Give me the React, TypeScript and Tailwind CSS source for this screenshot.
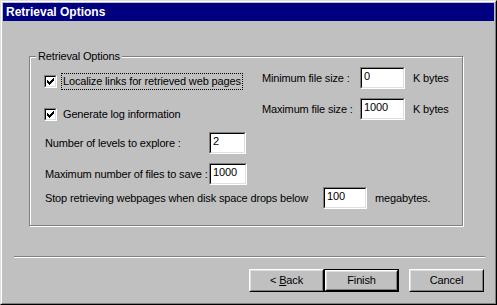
import React from 'react';

const Field: React.FC<{ value: string; width: string }> = ({ value, width }) => (
    <div className={`${width} h-[22px] border border-t-[#808080] border-l-[#808080] border-r-white border-b-white`}>
        <div className="h-full border border-t-black border-l-black border-r-[#dfdfdf] border-b-[#dfdfdf] bg-white pl-[2px] text-[11px] leading-[14px]">
            {value}
        </div>
    </div>
);

const CheckBox: React.FC = () => (
    <div className="w-[13px] h-[13px] shrink-0 border border-t-[#808080] border-l-[#808080] border-r-white border-b-white">
        <div className="w-full h-full border border-t-black border-l-black border-r-[#dfdfdf] border-b-[#dfdfdf] bg-white p-[1px]">
            <svg width="7" height="7" viewBox="0 0 7 7" shapeRendering="crispEdges" className="block">
                <path
                    fill="#000"
                    d="M6 0h1v1h-1z M5 1h2v1h-2z M0 2h1v1h-1z M4 2h3v1h-3z M0 3h2v1h-2z M3 3h3v1h-3z M0 4h5v1h-5z M1 5h3v1h-3z M2 6h1v1h-1z"
                />
            </svg>
        </div>
    </div>
);

const Button: React.FC<{ children: React.ReactNode; isDefault?: boolean }> = ({ children, isDefault }) => {
    const face = (
        <div className="w-full h-full border border-t-white border-l-white border-r-black border-b-black">
            <div className="w-full h-full border border-t-[#dfdfdf] border-l-[#dfdfdf] border-r-[#808080] border-b-[#808080] flex items-center justify-center text-[11px]">
                <span className="whitespace-pre">{children}</span>
            </div>
        </div>
    );
    if (isDefault) {
        return <div className="w-[75px] h-[23px] border border-black">{face}</div>;
    }
    return <div className="w-[75px] h-[23px]">{face}</div>;
};

const App: React.FC = () => {
    return (
        <div className="w-[497px] h-[305px] border border-t-[#dfdfdf] border-l-[#dfdfdf] border-r-black border-b-black bg-[#c0c0c0] text-black font-['Liberation_Sans',Arial,sans-serif] tracking-[-0.15px]">
            <div className="h-full border border-t-white border-l-white border-r-[#808080] border-b-[#808080] p-[1px] flex flex-col">
                {/* title bar */}
                <div className="h-[18px] shrink-0 bg-[#000080] text-white font-bold text-[12px] leading-[18px] pl-[3px] tracking-normal">
                    Retrieval Options
                </div>

                {/* group box */}
                <div className="ml-[26px] mt-[35px] w-[434px] h-[170px] shrink-0 relative border border-[#808080] shadow-[inset_1px_1px_0_#fff,1px_1px_0_#fff] text-[11px]">
                    <span className="absolute -top-[8px] left-[6px] bg-[#c0c0c0] px-[2px] leading-[15px]">Retrieval Options</span>

                    <div className="mt-[10px] flex">
                        <div className="ml-[14px] w-[218px] pt-[6px] flex flex-col">
                            <div className="h-[17px] flex items-center">
                                <CheckBox />
                                <span className="ml-[4px] border border-dotted border-black px-[1px] leading-[15px] whitespace-nowrap">
                                    Localize links for retrieved web pages
                                </span>
                            </div>
                            <div className="mt-[16px] h-[17px] flex items-center">
                                <CheckBox />
                                <span className="ml-[4px] border border-transparent px-[1px] leading-[15px] whitespace-nowrap">
                                    Generate log information
                                </span>
                            </div>
                        </div>
                        <div className="flex flex-col gap-[9px]">
                            <div className="h-[22px] flex items-center">
                                <span className="w-[98px] whitespace-nowrap">Minimum file size :</span>
                                <Field value="0" width="w-[45px]" />
                                <span className="ml-[8px] whitespace-nowrap">K bytes</span>
                            </div>
                            <div className="h-[22px] flex items-center">
                                <span className="w-[98px] whitespace-nowrap">Maximum file size :</span>
                                <Field value="1000" width="w-[45px]" />
                                <span className="ml-[8px] whitespace-nowrap">K bytes</span>
                            </div>
                        </div>
                    </div>

                    <div className="mt-[9px] ml-[15px] h-[22px] flex items-center">
                        <span className="w-[164px] whitespace-nowrap">Number of levels to explore :</span>
                        <Field value="2" width="w-[37px]" />
                    </div>
                    <div className="mt-[9px] ml-[15px] h-[22px] flex items-center">
                        <span className="w-[164px] whitespace-nowrap">Maximum number of files to save :</span>
                        <Field value="1000" width="w-[38px]" />
                    </div>
                    <div className="mt-[2px] ml-[15px] h-[22px] flex items-center">
                        <span className="w-[278px] whitespace-nowrap">Stop retrieving webpages when disk space drops below</span>
                        <Field value="100" width="w-[44px]" />
                        <span className="ml-[8px] whitespace-nowrap">megabytes.</span>
                    </div>
                </div>

                {/* separator */}
                <div className="ml-[11px] mt-[30px] w-[471px] h-[2px] shrink-0 border-t border-t-[#808080] border-b border-b-white" />

                {/* buttons */}
                <div className="ml-[246px] mt-[11px] flex">
                    <Button>
                        {'< '}
                        <span className="underline">B</span>
                        {'ack'}
                    </Button>
                    <Button isDefault>Finish</Button>
                    <div className="ml-[10px]">
                        <Button>Cancel</Button>
                    </div>
                </div>
            </div>
        </div>
    );
};

export default App;
